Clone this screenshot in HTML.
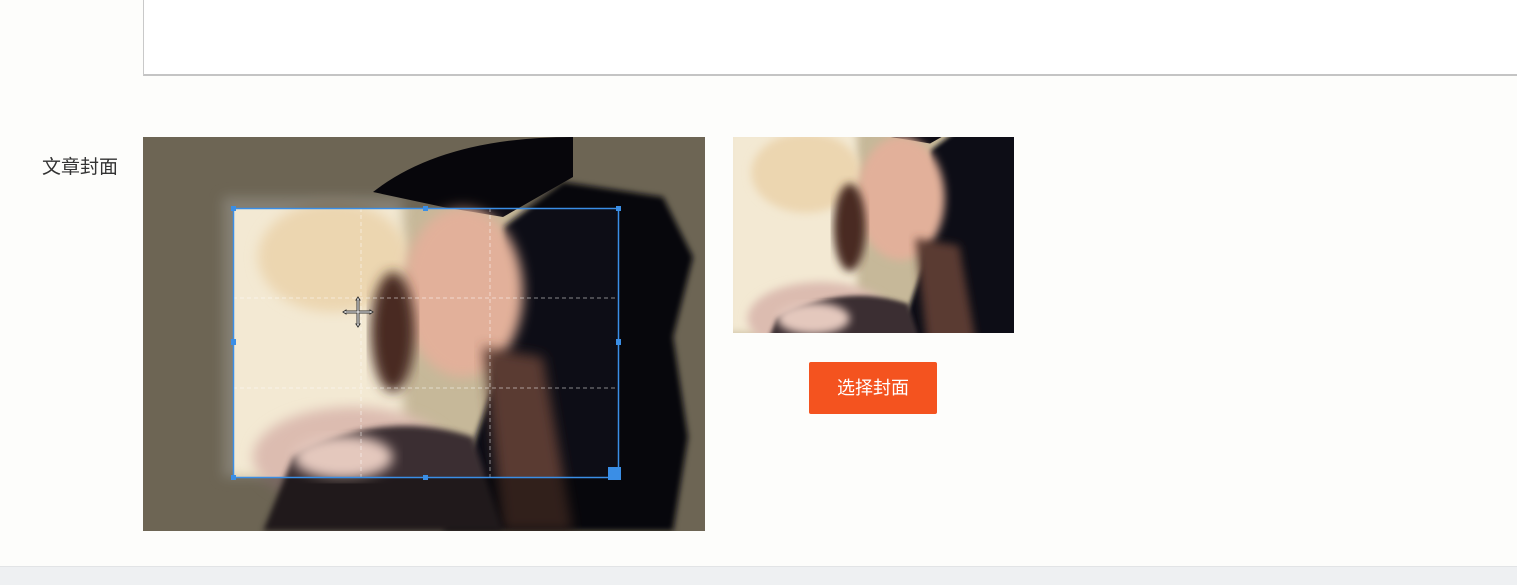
<!DOCTYPE html>
<html><head><meta charset="utf-8"><style>
html,body{margin:0;padding:0;width:1517px;height:585px;overflow:hidden;background:#fdfdfb;font-family:"Liberation Sans","Noto Sans CJK SC",sans-serif;position:relative}
.ta{position:absolute;left:143px;top:-2px;width:1380px;height:78px;border:1px solid #c9c9c9;border-bottom:2px solid #c4c4c4;background:#fff;box-sizing:border-box}
.lbl{position:absolute;left:42px;top:152px;font-size:19px;color:#333}
.btn{position:absolute;left:809px;top:362px;width:128px;height:52px;background:#f4531f;color:#fff;font-size:18px;text-align:center;line-height:52px;border-radius:2px}
.foot{position:absolute;left:0;top:566px;width:1517px;height:19px;background:#eef0f2;border-top:1px solid #e2e4e6}
svg{position:absolute}
</style></head><body>
<div class="ta"></div>
<div class="lbl">文章封面</div>
<svg width="0" height="0" style="position:absolute">
<defs>
<filter id="bl"><feGaussianBlur stdDeviation="6"/></filter>
<filter id="bl2"><feGaussianBlur stdDeviation="3"/></filter>
<g id="scene">
<rect x="0" y="0" width="562" height="394" fill="#c6b899"/>
<rect x="80" y="60" width="180" height="280" fill="#f3e9d3" filter="url(#bl)"/>
<path d="M360,90 L420,45 L520,60 L550,120 L530,200 L545,300 L530,394 L300,394 L350,250 Z" fill="#0c0a18" filter="url(#bl2)"/>
<ellipse cx="190" cy="120" rx="75" ry="55" fill="#ecd6b0" filter="url(#bl)"/>
<path d="M230,55 Q300,0 430,0 L430,40 L360,80 L300,70 Z" fill="#0e0c14"/>
<ellipse cx="320" cy="155" rx="60" ry="85" fill="#e2b09a" filter="url(#bl)"/>
<ellipse cx="250" cy="195" rx="22" ry="60" fill="#4a2c22" filter="url(#bl)"/>
<path d="M340,210 L400,220 L430,394 L360,394 Z" fill="#5a3a30" filter="url(#bl)"/>
<ellipse cx="210" cy="320" rx="100" ry="50" fill="#dcbcb0" filter="url(#bl)"/>
<path d="M150,320 Q240,270 330,300 L360,394 L120,394 Z" fill="#3a2e30" filter="url(#bl2)"/>
<ellipse cx="200" cy="320" rx="50" ry="22" fill="#e4c8bd" filter="url(#bl)"/>
</g>
<clipPath id="cr"><rect x="90" y="71" width="385" height="269"/></clipPath>
</defs></svg>
<svg width="562" height="394" style="left:143px;top:137px" viewBox="0 0 562 394">
<use href="#scene"/>
<rect width="562" height="394" fill="rgba(0,0,0,0.45)"/>
<g clip-path="url(#cr)"><use href="#scene"/></g>
<g stroke="rgba(255,255,255,0.5)" stroke-dasharray="4,3" stroke-width="1">
<line x1="218" y1="71" x2="218" y2="340"/><line x1="347" y1="71" x2="347" y2="340"/>
<line x1="90" y1="161" x2="475" y2="161"/><line x1="90" y1="251" x2="475" y2="251"/>
</g>
<rect x="90.5" y="71.5" width="385" height="269" fill="none" stroke="#3a8ee6" stroke-width="1.5"/>
<g fill="#3a8ee6">
<rect x="88" y="69" width="5" height="5"/><rect x="473" y="69" width="5" height="5"/><rect x="280" y="69" width="5" height="5"/>
<rect x="88" y="202" width="5" height="6"/><rect x="473" y="202" width="5" height="6"/>
<rect x="88" y="338" width="5" height="5"/><rect x="280" y="338" width="5" height="5"/><rect x="465" y="330" width="13" height="13"/>
</g>
<g transform="translate(215,175)" fill="#fff" stroke="#333" stroke-width="1">
<path d="M-2,-12 L0,-15 L2,-12 L1,-12 L1,-1 L12,-1 L12,-2 L15,0 L12,2 L12,1 L1,1 L1,12 L2,12 L0,15 L-2,12 L-1,12 L-1,1 L-12,1 L-12,2 L-15,0 L-12,-2 L-12,-1 L-1,-1 L-1,-12 Z"/>
</g>
</svg>
<svg width="281" height="196" style="left:733px;top:137px" viewBox="90 71 385 269" preserveAspectRatio="none">
<use href="#scene"/>
</svg>
<div class="btn">选择封面</div>
<div class="foot"></div>
</body></html>
